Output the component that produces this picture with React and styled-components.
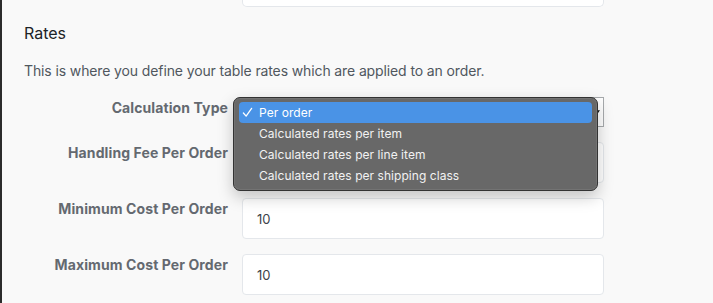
import React from 'react'
import styled, { createGlobalStyle } from 'styled-components'

const GlobalStyle = createGlobalStyle`
  html, body {
    margin: 0;
    padding: 0;
    background: #f9f9f9;
    font-family: Inter, "Noto Sans", "Liberation Sans", sans-serif;
    -webkit-font-smoothing: antialiased;
  }
`

const options = [
  'Per order',
  'Calculated rates per item',
  'Calculated rates per line item',
  'Calculated rates per shipping class',
]

const fields = [
  { label: 'Handling Fee Per Order', value: '' },
  { label: 'Minimum Cost Per Order', value: '10' },
  { label: 'Maximum Cost Per Order', value: '10' },
]

const Page = () => {
  return (
    <Wrapper>
      <FieldStub />
      <Heading>Rates</Heading>
      <Description>
        This is where you define your table rates which are applied to an order.
      </Description>
      <Form>
        <Row>
          <Label>Calculation Type</Label>
          <SelectWrap>
            <Select>
              <Arrow viewBox="0 0 6 4">
                <path d="M0 0 L6 0 L3 4 Z" fill="#111" />
              </Arrow>
            </Select>
            <Menu>
              {options.map((opt, i) => (
                <MenuItem key={opt} $active={i === 0}>
                  {i === 0 && (
                    <Check viewBox="0 0 12 12">
                      <path d="M1.5 6.5 L4.5 10 L10.5 1.5" fill="none" stroke="#fff" strokeWidth="1.4" strokeLinecap="round" strokeLinejoin="round" />
                    </Check>
                  )}
                  {opt}
                </MenuItem>
              ))}
            </Menu>
          </SelectWrap>
        </Row>
        {fields.map((f) => (
          <Row key={f.label}>
            <Label>{f.label}</Label>
            <Input>{f.value}</Input>
          </Row>
        ))}
      </Form>
    </Wrapper>
  )
}

const Wrapper = styled.section`
  min-height: 303px;
  box-sizing: border-box;
  border-left: 2px solid #2c2c2c;
  padding-left: 22px;
  overflow: hidden;
`

const FieldStub = styled.div`
  margin-left: 218px;
  width: 362px;
  height: 7px;
  box-sizing: border-box;
  background: #fff;
  border: 1px solid #e4e7eb;
  border-top: none;
  border-radius: 0 0 5px 5px;
`

const Heading = styled.h2`
  margin: 16px 0 0;
  font-size: 16px;
  line-height: 20px;
  font-weight: 400;
  color: #1d2327;
`

const Description = styled.p`
  margin: 18px 0 0;
  font-size: 14px;
  line-height: 20px;
  letter-spacing: -0.12px;
  color: #50575e;
`

const Form = styled.div`
  margin-top: 16px;
  display: flex;
  flex-direction: column;
  gap: 15px;
`

const Row = styled.div`
  display: grid;
  grid-template-columns: 204px 362px;
  column-gap: 14px;
  align-items: start;
`

const Label = styled.div`
  padding-top: 1px;
  font-size: 14px;
  line-height: 20px;
  font-weight: 700;
  letter-spacing: 0.1px;
  color: #646970;
  text-align: right;
  white-space: nowrap;
`

const SelectWrap = styled.div`
  position: relative;
`

const Select = styled.div`
  height: 30px;
  box-sizing: border-box;
  border: 1px solid #a7aaad;
  background: #fff;
  position: relative;
`

const Arrow = styled.svg`
  position: absolute;
  right: 3px;
  top: 12px;
  width: 5px;
  height: 4px;
`

const Menu = styled.div`
  position: absolute;
  left: -9px;
  top: 0;
  width: 365px;
  box-sizing: border-box;
  padding: 4px 5px;
  background: #686868;
  border: 1px solid #333;
  border-radius: 7px;
  box-shadow: 0 0 0 1px rgba(255, 255, 255, 0.08) inset, 0 6px 16px rgba(0, 0, 0, 0.22);
  z-index: 2;
`

const MenuItem = styled.div`
  position: relative;
  height: 21px;
  line-height: 21px;
  padding-left: 20px;
  font-size: 12px;
  letter-spacing: 0.05px;
  color: ${({ $active }) => ($active ? '#fff' : '#f2f2f2')};
  background: ${({ $active }) => ($active ? '#4a93e6' : 'transparent')};
  border-radius: 4px;
  white-space: nowrap;
`

const Check = styled.svg`
  position: absolute;
  left: 3px;
  top: 5px;
  width: 11px;
  height: 11px;
`

const Input = styled.div`
  height: 41px;
  box-sizing: border-box;
  padding: 0 14px;
  display: flex;
  align-items: center;
  background: #fff;
  border: 1px solid #e4e7eb;
  border-radius: 4px;
  font-size: 13px;
  color: #3c434a;
`

const App = () => (
  <>
    <GlobalStyle />
    <Page />
  </>
)

export default App
